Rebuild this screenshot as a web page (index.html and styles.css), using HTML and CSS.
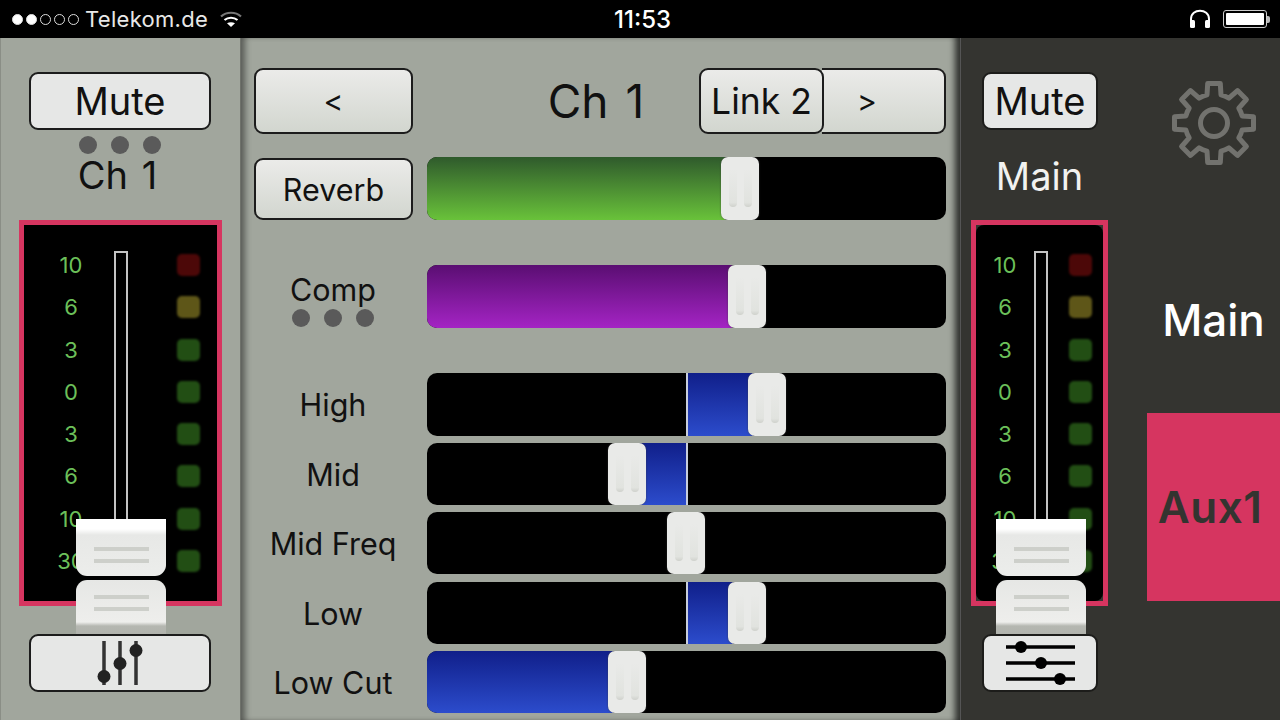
FILE: index.html
```html
<!DOCTYPE html>
<html lang="de">
<head>
    <meta charset="UTF-8">
    <title>Mixer</title>
    <link rel="stylesheet" href="styles.css">
</head>
<body>

<div class="status-bar">
    <div class="status-left">
        <div class="signal">
            <span class="sig on"></span><span class="sig on"></span><span class="sig"></span><span class="sig"></span><span class="sig"></span>
        </div>
        <span class="carrier">Telekom.de</span>
        <svg class="wifi" width="24" height="18" viewBox="0 0 24 18">
            <path d="M2 6.5 C7.5 1.5 16.5 1.5 22 6.5" fill="none" stroke="#777" stroke-width="2.2"/>
            <path d="M5.5 10 C9 7 15 7 18.5 10" fill="none" stroke="#fff" stroke-width="2.2"/>
            <path d="M8 13.2 C10.500 11.800 13.500 11.800 16 13.200 L12 17 Z" fill="#fff"/>
        </svg>
    </div>
    <div class="status-time">11:53</div>
    <div class="status-right">
        <svg width="24" height="22" viewBox="0 0 24 22">
            <path d="M3 16 V11 C3 0 21 0 21 11 V16" fill="none" stroke="#fff" stroke-width="2"/>
            <rect x="2" y="12" width="5" height="8" rx="1.500" fill="#fff"/>
            <rect x="17" y="12" width="5" height="8" rx="1.500" fill="#fff"/>
        </svg>
        <div class="battery"><div class="battery-level"></div></div>
        <div class="battery-tip"></div>
    </div>
</div>

<div class="mixer">
    <!-- channel strip -->
    <div class="strip">
        <button class="btn btn-wide">Mute</button>
        <div class="dots dots-strip"><span></span><span></span><span></span></div>
        <div class="strip-name">Ch 1</div>
        <div class="meter meter-wide">
            <div class="meter-inner">
                <div class="scale">
                    <span>10</span><span>6</span><span>3</span><span>0</span><span>3</span><span>6</span><span>10</span><span>30</span>
                </div>
                <div class="track"></div>
                <div class="leds">
                    <span class="led red"></span><span class="led yellow"></span><span class="led"></span><span class="led"></span><span class="led"></span><span class="led"></span><span class="led"></span><span class="led"></span>
                </div>
            </div>
        </div>
        <div class="fader fader-left">
            <div class="knob-top"><i></i><i></i></div>
            <div class="knob-bottom"><i></i><i></i></div>
        </div>
        <button class="btn btn-wide btn-icon">
            <svg width="48" height="46" viewBox="0 0 48 46">
                <path d="M8 1 V45 M24 1 V45 M40 1 V45" stroke="#333" stroke-width="3.500"/>
                <circle cx="8" cy="36.500" r="6.500" fill="#222"/>
                <circle cx="24" cy="23.500" r="6.500" fill="#222"/>
                <circle cx="40" cy="10.500" r="6.500" fill="#222"/>
            </svg>
        </button>
    </div>

    <!-- channel editor -->
    <div class="editor">
        <div class="top-row">
            <button class="btn btn-nav">&lt;</button>
            <div class="title">Ch 1</div>
            <div class="link-group">
                <button class="btn btn-link">Link 2</button>
                <button class="btn btn-next">&gt;</button>
            </div>
        </div>

        <div class="row row-reverb">
            <button class="btn btn-reverb">Reverb</button>
            <div class="slider">
                <div class="fill fill-green" style="left: 0; width: 298px"></div>
                <div class="thumb" style="left: 294px"><i></i><i></i></div>
            </div>
        </div>

        <div class="row row-comp">
            <div class="label label-comp">
                Comp
                <div class="dots"><span></span><span></span><span></span></div>
            </div>
            <div class="slider">
                <div class="fill fill-purple" style="left: 0; width: 305px"></div>
                <div class="thumb" style="left: 301px"><i></i><i></i></div>
            </div>
        </div>

        <div class="row row-high">
            <div class="label">High</div>
            <div class="slider">
                <div class="zero"></div>
                <div class="fill fill-blue" style="left: 260px; width: 66px"></div>
                <div class="thumb" style="left: 321px"><i></i><i></i></div>
            </div>
        </div>

        <div class="row row-mid">
            <div class="label">Mid</div>
            <div class="slider">
                <div class="zero"></div>
                <div class="fill fill-blue" style="left: 212px; width: 48px"></div>
                <div class="thumb" style="left: 181px"><i></i><i></i></div>
            </div>
        </div>

        <div class="row row-mid">
            <div class="label">Mid Freq</div>
            <div class="slider">
                <div class="thumb" style="left: 240px"><i></i><i></i></div>
            </div>
        </div>

        <div class="row row-low">
            <div class="label">Low</div>
            <div class="slider">
                <div class="zero"></div>
                <div class="fill fill-blue" style="left: 260px; width: 46px"></div>
                <div class="thumb" style="left: 301px"><i></i><i></i></div>
            </div>
        </div>

        <div class="row row-mid">
            <div class="label">Low Cut</div>
            <div class="slider">
                <div class="fill fill-blue" style="left: 0; width: 186px"></div>
                <div class="thumb" style="left: 181px"><i></i><i></i></div>
            </div>
        </div>
    </div>

    <!-- main strip + side nav -->
    <div class="main-side">
        <div class="main-strip">
            <button class="btn btn-narrow">Mute</button>
            <div class="strip-name strip-name-main">Main</div>
            <div class="meter meter-narrow">
                <div class="meter-inner">
                    <div class="scale">
                        <span>10</span><span>6</span><span>3</span><span>0</span><span>3</span><span>6</span><span>10</span><span>30</span>
                    </div>
                    <div class="track"></div>
                    <div class="leds">
                        <span class="led red"></span><span class="led yellow"></span><span class="led"></span><span class="led"></span><span class="led"></span><span class="led"></span><span class="led"></span><span class="led"></span>
                    </div>
                </div>
            </div>
            <div class="fader fader-right">
                <div class="knob-top"><i></i><i></i></div>
                <div class="knob-bottom"><i></i><i></i></div>
            </div>
            <button class="btn btn-narrow btn-icon">
                <svg width="70" height="46" viewBox="0 0 70 46">
                    <path d="M1 7 H70 M1 23 H70 M1 39 H70" stroke="#000" stroke-width="3.500"/>
                    <circle cx="16" cy="7" r="6" fill="#000"/>
                    <circle cx="36" cy="23" r="6" fill="#000"/>
                    <circle cx="55" cy="39" r="6" fill="#000"/>
                </svg>
            </button>
        </div>
        <div class="side-nav">
            <svg class="gear" width="84" height="84" viewBox="-42 -42 84 84">
                <path d="M-7 -28.100 L-6.300 -39.500 L6.300 -39.500 L7 -28.100 A29 29 0 0 1 14.900 -24.800 L23.500 -32.400 L32.400 -23.500 L24.800 -14.900 A29 29 0 0 1 28.100 -7 L39.500 -6.300 L39.500 6.300 L28.100 7 A29 29 0 0 1 24.800 14.900 L32.400 23.500 L23.500 32.400 L14.900 24.800 A29 29 0 0 1 7 28.100 L6.300 39.500 L-6.300 39.500 L-7 28.100 A29 29 0 0 1 -14.900 24.800 L-23.500 32.400 L-32.400 23.500 L-24.800 14.900 A29 29 0 0 1 -28.100 7 L-39.500 6.300 L-39.500 -6.300 L-28.100 -7 A29 29 0 0 1 -24.800 -14.900 L-32.400 -23.500 L-23.500 -32.400 L-14.900 -24.800 A29 29 0 0 1 -7 -28.100 Z" fill="none" stroke="#72726e" stroke-width="5" stroke-linejoin="round"/>
                <circle r="13.500" fill="none" stroke="#72726e" stroke-width="5"/>
            </svg>
            <div class="nav-main">Main</div>
            <div class="nav-aux">Aux1</div>
        </div>
    </div>
</div>

</body>
</html>
```

FILE: styles.css
```css
* {
    box-sizing: border-box;
}
body {
    margin: 0;
    width: 1280px;
    height: 720px;
    overflow: hidden;
    background-color: #000;
    font-family: 'Inter', 'Liberation Sans', sans-serif;
    color: #111;
}
.status-bar {
    height: 38px;
    background-color: #000;
    color: #fff;
    display: flex;
    align-items: center;
    justify-content: space-between;
    padding: 0 12px;
    position: relative;
}
.status-left {
    display: flex;
    align-items: center;
}
.signal {
    display: flex;
    gap: 3px;
}
.sig {
    width: 11px;
    height: 11px;
    border: 1px solid #ddd;
    border-radius: 50%;
}
.sig.on {
    background-color: #fff;
}
.carrier {
    font-size: 22px;
    margin-left: 6px;
    color: #e8e8e8;
    letter-spacing: 0.3px;
}
.wifi {
    margin-left: 11px;
}
.status-time {
    position: absolute;
    left: 0;
    right: 0;
    text-align: center;
    font-size: 24px;
    font-weight: 500;
    padding-left: 5px;
}
.status-right {
    display: flex;
    align-items: center;
    margin-right: -2px;
}
.battery {
    width: 44px;
    height: 18px;
    border: 1px solid #ccc;
    border-radius: 3px;
    padding: 2px;
    margin-left: 11px;
}
.battery-level {
    height: 100%;
    background-color: #fff;
    border-radius: 1px;
}
.battery-tip {
    width: 3px;
    height: 7px;
    background-color: #bbb;
    border-radius: 0 2px 2px 0;
}
.mixer {
    display: flex;
    height: 682px;
}

/* buttons */
.btn {
    display: flex;
    align-items: center;
    justify-content: center;
    padding: 0;
    font-family: inherit;
    color: #111;
    background-color: #e6e7e6;
    border: 2px solid #1c1c1c;
    border-radius: 9px;
    font-size: 38px;
}
.btn-wide {
    width: 182px;
    height: 58px;
}
.btn-narrow {
    width: 116px;
    height: 58px;
    border-color: #1c1c1a;
}
.btn-icon {
    position: relative;
    z-index: 3;
    margin-top: 28px;
}
.btn-nav,
.btn-reverb,
.btn-link,
.btn-next {
    background: linear-gradient(#ebebe9, #d2d6cf);
}
.btn-nav {
    width: 159px;
    height: 66px;
    font-size: 30px;
}
.btn-reverb {
    width: 159px;
    height: 62px;
    margin-top: 1px;
    font-size: 30.500px;
}
.btn-link {
    width: 125px;
    font-size: 35.500px;
    position: relative;
    z-index: 1;
}
.btn-next {
    flex: 1;
    margin-left: -2px;
    padding-right: 32px;
    font-size: 30px;
    border-left: none;
    border-radius: 0 9px 9px 0;
}

/* dots */
.dots {
    display: flex;
    justify-content: center;
    gap: 14px;
}
.dots span {
    width: 18px;
    height: 18px;
    border-radius: 50%;
    background-color: #5a5a5a;
}
.dots-strip {
    margin-top: 6px;
}

/* left strip */
.strip {
    width: 241px;
    padding: 34px 0 0 18px;
    background-color: #a1a69d;
    border-left: 1px solid #8a8e86;
    border-right: 1px solid #6e716a;
    position: relative;
    display: flex;
    flex-direction: column;
}
.strip > .btn {
    margin-left: 10px;
}
.strip .dots-strip {
    width: 202px;
}
.strip-name {
    width: 197px;
    text-align: center;
    font-size: 38px;
    line-height: 40px;
    margin-top: 1px;
    word-spacing: 3px;
}
.strip-name-main {
    width: 137px;
    color: #f2f2f0;
    margin-top: 26px;
}

/* meters */
.meter {
    height: 386px;
    margin-top: 25px;
    border: 5px solid #d63560;
    background-color: #000;
    overflow: hidden;
    flex: none;
}
.meter-wide {
    width: 203px;
}
.meter-narrow {
    width: 137px;
    background-color: #343430;
}
.meter-inner {
    display: grid;
    height: 100%;
}
.meter-wide .meter-inner {
    grid-template-columns: 90px 14px 1fr;
}
.meter-narrow .meter-inner {
    grid-template-columns: 58px 14px 1fr;
    border-radius: 8px;
    background-color: #000;
}
.scale,
.leds {
    display: flex;
    flex-direction: column;
    padding-top: 19px;
}
.meter-wide .scale {
    padding-left: 4px;
}
.scale span {
    height: 42.300px;
    line-height: 42px;
    text-align: center;
    font-size: 22px;
    color: #6cc05a;
}
.track {
    margin-top: 26px;
    height: 290px;
    border: 2px solid #c4c4c4;
    border-bottom: none;
}
.leds {
    padding-top: 29px;
    gap: 20.300px;
}
.meter-wide .leds {
    margin-left: 49px;
}
.meter-narrow .leds {
    margin-left: 21px;
}
.led {
    width: 23px;
    height: 22px;
    border-radius: 5px;
    background-color: #224e14;
    filter: blur(0.8px);
}
.led.red {
    background-color: #4c0808;
}
.led.yellow {
    background-color: #5e5618;
}

/* vertical fader knob */
.fader {
    position: absolute;
    top: 481px;
    width: 90px;
    height: 116px;
    z-index: 2;
}
.fader-left {
    left: 75px;
}
.fader-right {
    left: 35px;
}
.knob-top {
    height: 57px;
    padding-top: 28px;
    background: linear-gradient(#fff, #fff 10px, #e7e8e6 16px, #ecedeb);
    border-radius: 0 0 11px 11px;
}
.knob-bottom {
    height: 55px;
    margin-top: 4px;
    padding-top: 15px;
    background: linear-gradient(#e6e7e5, #eeeeec 42px, #b5b7b1 46px, #b0b2ac);
    border-radius: 11px 11px 0 0;
}
.knob-top i,
.knob-bottom i {
    display: block;
    width: 55px;
    height: 4px;
    margin: 0 auto 8px;
    background-color: #cdcfca;
}

/* middle editor */
.editor {
    flex: 1;
    padding: 30px 14px 0 13px;
    background-color: #a1a69d;
    box-shadow: inset 7px 0 6px -3px rgba(0, 0, 0, 0.45), inset -9px 0 6px -4px rgba(0, 0, 0, 0.7);
}
.top-row {
    display: flex;
    height: 66px;
}
.title {
    flex: 1;
    padding-left: 80px;
    text-align: center;
    font-size: 46px;
    line-height: 66px;
    word-spacing: 4px;
}
.link-group {
    display: flex;
    width: 247px;
}
.row {
    display: flex;
    gap: 14px;
    height: 62px;
    margin-top: 7px;
}
.row-reverb {
    height: 63px;
    margin-top: 23px;
}
.row-comp {
    height: 63px;
    margin-top: 45px;
}
.row-high {
    height: 63px;
    margin-top: 45px;
}
.row-mid {
    margin-top: 7px;
}
.row-low {
    margin-top: 8px;
}
.label {
    width: 159px;
    padding-right: 1px;
    text-align: center;
    font-size: 30.500px;
    line-height: 64px;
}
.label-comp {
    line-height: 50px;
}
.label-comp .dots {
    margin-top: -6px;
}
.slider {
    flex: 1;
    position: relative;
    background-color: #000;
    border-radius: 10px;
    overflow: hidden;
}
.fill {
    position: absolute;
    top: 0;
    bottom: 0;
}
.fill-green {
    background: linear-gradient(#2f5a2c, #69c23a);
}
.fill-purple {
    background: linear-gradient(#5a0e72, #a424c4);
}
.fill-blue {
    background: linear-gradient(#101f8a, #2c4ccc);
}
.zero {
    position: absolute;
    left: 259px;
    top: 0;
    bottom: 0;
    width: 2px;
    background-color: #c8cedc;
    z-index: 1;
}
.thumb {
    position: absolute;
    top: 0;
    bottom: 0;
    width: 38px;
    display: flex;
    justify-content: center;
    gap: 7px;
    padding: 12px 0 13px;
    background-color: #e9eae8;
    border-radius: 7px;
    box-shadow: 0 0 2px rgba(60, 60, 60, 0.8);
    z-index: 2;
}
.thumb i {
    width: 8px;
    background: linear-gradient(#e9eae8, #e1e3df 88%, #cfd1cc);
    border-radius: 0 0 4px 4px;
}

/* right side */
.main-side {
    width: 320px;
    display: flex;
    background-color: #343430;
    border-left: 1px solid #555;
}
.main-strip {
    width: 186px;
    padding: 34px 0 0 10px;
    position: relative;
    display: flex;
    flex-direction: column;
}
.main-strip > .btn {
    margin-left: 11px;
}
.main-strip .meter {
    margin-top: 24px;
}
.side-nav {
    flex: 1;
    display: flex;
    flex-direction: column;
    align-items: center;
    padding-top: 43px;
}
.nav-main {
    margin-top: 130px;
    font-size: 44px;
    font-weight: 500;
    line-height: 50px;
    color: #fff;
}
.nav-aux {
    width: 133px;
    height: 188px;
    margin-top: 68px;
    padding: 68px 7px 0 0;
    background-color: #d63560;
    color: #343430;
    font-size: 44px;
    font-weight: 600;
    line-height: 52px;
    letter-spacing: 0.5px;
    text-align: center;
}
```
